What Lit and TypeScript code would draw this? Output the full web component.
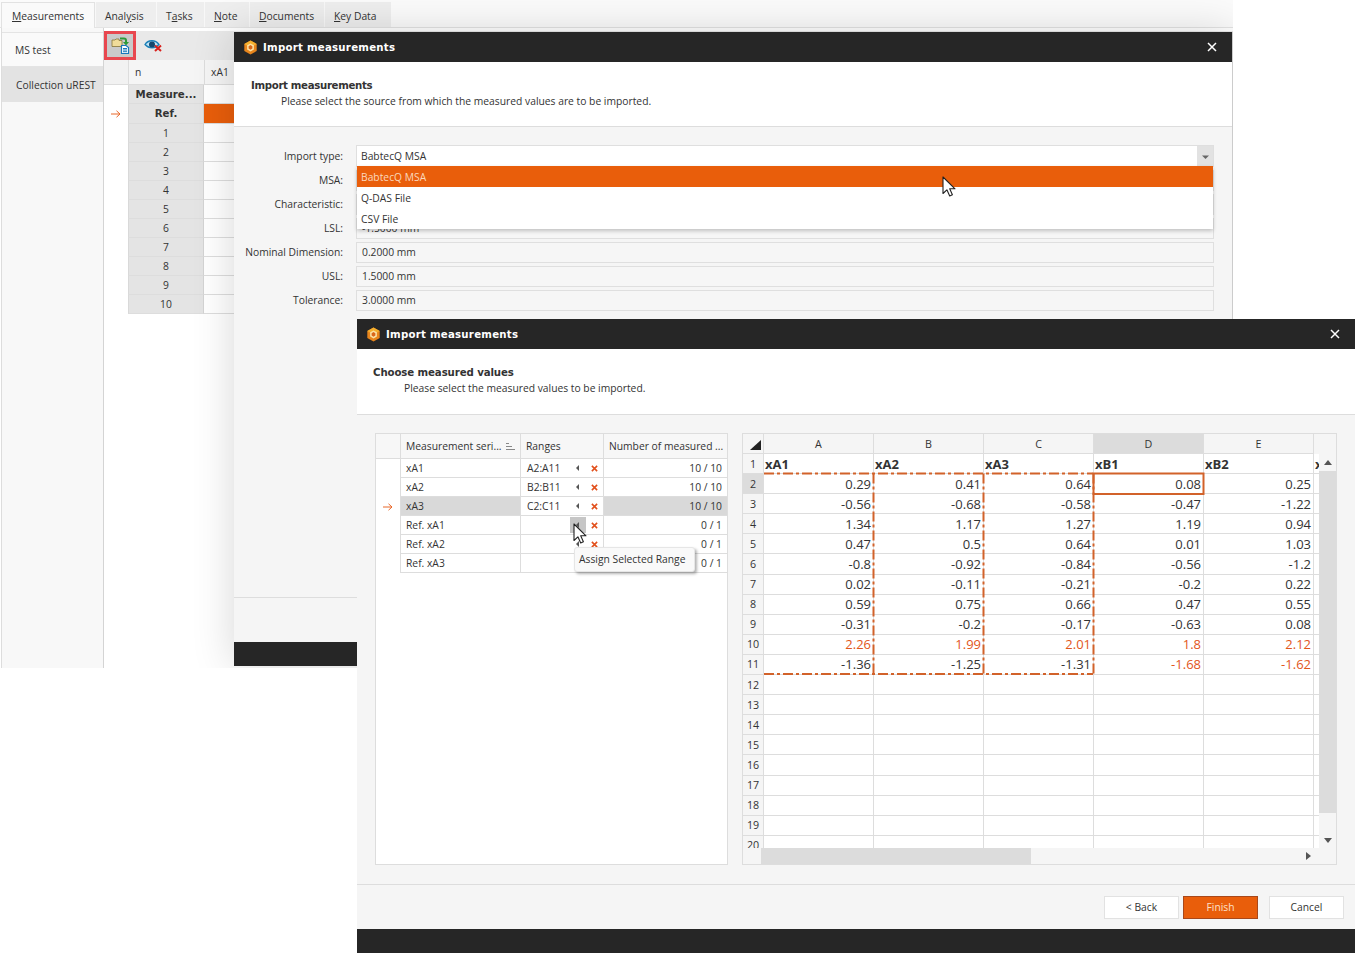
import { LitElement, html, css, svg } from "lit";
import { customElement } from "lit/decorators.js";

const logo = () => html`<svg class="logo" viewBox="0 0 16 16"><path d="M8 .5 14.6 4.2V11.8L8 15.5 1.4 11.8V4.2Z" fill="#e8851c"/><path d="M8 .5 14.6 4.2 8 8 1.4 4.2Z" fill="#f5b02e"/><path d="M8 3.6 11.6 5.7V10L8 12.2 4.4 10V5.7Z" fill="#fbe3a6"/><path d="M8 5.4 10 6.6V9.1L8 10.3 6 9.1V6.6Z" fill="#d9661a"/></svg>`;
const closeX = () => html`<svg class="close" viewBox="0 0 10 10"><path d="M1 1 9 9M9 1 1 9" stroke="#fff" stroke-width="1.5" fill="none"/></svg>`;
const rowArrow = () => html`<svg class="rowarrow" viewBox="0 0 10 8"><path d="M0 4H9M5.5 .8 9 4 5.5 7.2" stroke="#e8682a" stroke-width="1" fill="none"/></svg>`;
const cursor = () => svg`<path d="M1 1V17.5L4.9 13.8 7.7 20 10.4 18.8 7.7 12.8H13Z" fill="#fff" stroke="#222" stroke-width="1.1" stroke-linejoin="round"/>`;
const redX = () => html`<svg class="redx" viewBox="0 0 8 8"><path d="M1 1 7 7M7 1 1 7" stroke="#e2501c" stroke-width="1.8" fill="none"/></svg>`;
const tri = () => html`<svg class="tri" viewBox="0 0 4 8"><path d="M4 0V8L0 4Z" fill="#555"/></svg>`;

const cols = [
  ["0.29","-0.56","1.34","0.47","-0.8","0.02","0.59","-0.31","2.26","-1.36"],
  ["0.41","-0.68","1.17","0.5","-0.92","-0.11","0.75","-0.2","1.99","-1.25"],
  ["0.64","-0.58","1.27","0.64","-0.84","-0.21","0.66","-0.17","2.01","-1.31"],
  ["0.08","-0.47","1.19","0.01","-0.56","-0.2","0.47","-0.63","1.8","-1.68"],
  ["0.25","-1.22","0.94","1.03","-1.2","0.22","0.55","0.08","2.12","-1.62"],
];
const heads = ["xA1","xA2","xA3","xB1","xB2"];

@customElement("app-root")
export class AppRoot extends LitElement {
  static styles = css`
    :host { display:block; width:1355px; height:953px; position:relative; overflow:hidden; background:#fff; color:#333;
      font-family:"Open Sans","Noto Sans",sans-serif; font-size:10.3px; }
    * { box-sizing:border-box; }
    svg { display:block; }
    .app { position:absolute; left:0; top:0; width:1233px; height:668px; overflow:hidden; background:#fff; display:flex; flex-direction:column; }
    .tabs { height:28px; padding:2px 0 0 1px; display:flex; background:#fbfbfb; border-bottom:1px solid #e4e4e4; flex:none; }
    .tab { background:#eee; border-left:1px solid #f8f8f8; height:25px; padding-top:7px; padding-left:9px; white-space:nowrap; }
    .tab.on { background:#fafafa; width:94px; padding-left:10px; padding-top:6px; border:1px solid #e2e2e2; border-bottom:none; height:26px; }
    .t1{width:61px}.t2{width:48px}.t3{width:45px}.t4{width:75px}.t5{width:67px}
    .body { flex:1; display:flex; padding-left:1px; min-height:0; }
    .rail { width:103px; flex:none; background:#f8f8f8; border-left:1px solid #ddd; border-right:1px solid #d4d4d4; padding-top:4px; }
    .rail div { height:35px; display:flex; align-items:center; padding-left:13px; white-space:nowrap; }
    .rail .ms { background:#fafafa; border-top:1px solid #e4e4e4; border-bottom:1px solid #e4e4e4; }
    .rail .col { background:#e3e3e3; padding-left:14px; }
    .main { flex:1; min-width:0; padding-top:3px; }
    .toolbar { height:29px; background:#e9e9e9; display:flex; align-items:center; }
    .imp { width:32px; height:29px; border:3px solid #e8474f; background:#cacaca; display:flex; align-items:center; justify-content:center; }
    .eye { margin-left:8px; margin-top:-1px; }
    .bgrid { display:grid; grid-template-columns:24px 76px 1fr; grid-template-rows:19px 20px; grid-auto-rows:19px; width:130px; }
    .bgrid > div { border-bottom:1px solid #ddd; display:flex; align-items:center; }
    .bhead { display:grid; grid-template-columns:24px 76px 1fr; height:25px; width:130px; background:#f5f5f5; border-bottom:1px solid #ddd; }
    .bhead div { display:flex; align-items:center; padding-left:6px; border-left:1px solid #ddd; }
    .bhead div:first-child { background:#f2f2f2; border-left:none; }
    .bgrid .e { border-bottom:none; position:relative; justify-content:center; }
    .bgrid .n { background:#e4e4e4; justify-content:center; border-left:1px solid #d9d9d9; border-right:1px solid #d4d4d4; }
    .bgrid .b { font-family:"DejaVu Sans",sans-serif; font-weight:700; font-size:10.2px; }
    .bgrid .o { background:#e95e0b; }
    .rowarrow { width:10px; height:8px; }

    .dlg { position:absolute; width:998px; height:634px; background:#f5f5f5; display:flex; flex-direction:column; }
    .d1 { left:234px; top:32px; width:999px; border-right:1px solid #ccc; box-shadow:0 0 40px rgba(0,0,0,.16); }
    .d2 { left:357px; top:319px; }
    .bar { height:30px; background:#262626; color:#fff; display:flex; align-items:center; flex:none; padding-left:9px; }
    .bar .ttl { font-family:"DejaVu Sans",sans-serif; font-weight:700; font-size:10.2px; letter-spacing:.25px; margin-left:5px; flex:1; }
    .logo { width:15px; height:15px; }
    .close { width:10px; height:10px; margin-right:15px; }
    .hd { background:#fff; border-bottom:1px solid #ddd; flex:none; }
    .d1 .hd { height:65px; padding:16px 0 0 17px; }
    .d2 .hd { height:66px; padding:16px 0 0 16px; }
    .hd h2 { margin:0; font-family:"DejaVu Sans",sans-serif; font-size:10.2px; font-weight:700; line-height:15px; color:#333; }
    .d1 .hd h2 { letter-spacing:-.33px; }
    .d2 .hd h2 { letter-spacing:-.1px; }
    .hd p { margin:1px 0 0 30px; line-height:15px; }
    .d2 .hd p { margin-left:31px; }
    .d1 .f { flex:1; padding:19px 18px 0 0; min-height:0; }
    .frow { display:grid; grid-template-columns:109px 858px; column-gap:13px; height:24px; align-items:start; }
    .frow label { text-align:right; line-height:21px; white-space:nowrap; }
    .fld { height:21px; border:1px solid #dfdfdf; background:#f6f6f6; padding-left:5px; line-height:19px; }
    .frow.top .fld { background:#fff; height:22px; margin-top:-1px; display:flex; justify-content:space-between; padding:0 0 0 4px; line-height:20px; }
    .combo { width:16px; background:#e2e2e2; display:flex; align-items:center; justify-content:center; }
    .dd { position:absolute; left:123px; top:134px; width:856px; height:63px; background:#fff; box-shadow:0 2px 4px rgba(0,0,0,.22); }
    .dd div { height:21px; line-height:20px; padding:1px 0 0 4px; }
    .dd .sel { background:#e95e0b; color:#fbd8bd; }
    .d1 .ft { height:45px; flex:none; border-top:1px solid #ddd; }
    .dark { height:24px; background:#262626; flex:none; }

    .d2 .c { flex:1; display:flex; padding:18px 18px 0 18px; min-height:0; gap:14px; }
    .ltable { width:353px; height:432px; border:1px solid #ddd; background:#fff; display:grid; grid-template-columns:24px 120px 83px 124px; grid-template-rows:25px repeat(6,19px); align-content:start; }
    .lh { background:#f7f7f7; border-bottom:1px solid #ddd; border-left:1px solid #ddd; display:flex; align-items:center; padding-left:5px; white-space:nowrap; overflow:hidden; justify-content:space-between; }
    .lh:first-child { border-left:none; }
    .lc { border-left:1px solid #ddd; border-bottom:1px solid #ddd; padding-left:5px; display:flex; align-items:center; white-space:nowrap; }
    .lc.r { justify-content:flex-end; padding-right:5px; }
    .lc.s { background:#d9d9d9; }
    .lc.ind { border:none; justify-content:center; padding:0; }
    .lc.rg { padding-left:6px; }
    .rg span { width:43px; }
    .hv { width:16px; height:16px; display:flex; align-items:center; justify-content:center; }
    .hv.on { background:#c6c6c6; }
    .redx { width:7px; height:7px; margin-left:5px; }
    .tri { width:3px; height:6px; margin-right:1px; }

    .sheet { width:595px; height:432px; border:1px solid #ddd; display:grid; grid-template-columns:1fr 17px; grid-template-rows:20px 394px 16px; background:#f5f5f5; }
    .shead { grid-column:1 / 3; display:grid; grid-template-columns:21px repeat(5,110px) 1fr; background:#f5f5f5; }
    .shead div { border-right:1px solid #ddd; border-bottom:1px solid #ddd; display:flex; align-items:center; justify-content:center; position:relative; font-size:10.7px; }
    .shead div:last-child { border-right:none; border-bottom:none; }
    .shead .hl { background:#dcdcdc; }
    .corner { width:11px; height:10px; position:absolute; right:2px; bottom:3px; }
    .vp { position:relative; overflow:hidden; background:#fff; }
    .srows { display:grid; grid-template-columns:21px repeat(5,110px) 10px; grid-auto-rows:20.1px; font-size:13px; }
    .srows > div { border-right:1px solid #ddd; border-bottom:1px solid #ddd; display:flex; align-items:center; justify-content:flex-end; padding-right:2px; overflow:hidden; white-space:nowrap; }
    .srows .rh { background:#f5f5f5; justify-content:center; font-size:10.7px; padding:0; }
    .srows .rh.hl { background:#dcdcdc; }
    .srows .hb { justify-content:flex-start; font-weight:700; padding-left:1px; }
    .srows .alert { color:#e2561a; }
    .ants { position:absolute; left:0; top:0; pointer-events:none; }
    .vs { background:#f5f5f5; display:flex; flex-direction:column; align-items:center; }
    .vs .up { height:17px; flex:none; display:flex; align-items:center; justify-content:center; }
    .vs .th { height:342px; width:100%; background:#dcdcdc; flex:none; }
    .vs .dn { flex:1; display:flex; align-items:flex-end; padding-bottom:5px; }
    .hs { display:flex; align-items:center; background:#f5f5f5; padding-left:18px; }
    .hs .th { width:270px; height:100%; background:#dcdcdc; }
    .hs .sp { flex:1; }
    .cornerfill { background:#f5f5f5; }
    .ft2 { height:45px; flex:none; margin-top:19px; border-top:1px solid #ddd; padding:11px 11px 0 0; display:flex; justify-content:flex-end; }
    .btn { width:75px; height:23px; background:#fff; border:1px solid #e2e2e2; display:flex; align-items:center; justify-content:center; padding-bottom:1px; }
    .btn.pri { background:#e95e0b; border-color:#a8481a; color:#fde0c9; margin:0 11px 0 4px; }
    .tip { position:absolute; left:574px; top:547px; width:121px; height:25px; background:#f9f9f9; border:1px solid #e6e6e6; border-radius:3px; box-shadow:2px 2px 3px rgba(0,0,0,.3); display:flex; align-items:center; padding:0 0 2px 4px; white-space:nowrap; }
    .cur { position:absolute; width:14px; height:21px; overflow:visible; }
    .c1 { left:942px; top:176px; }
    .c2 { left:573px; top:523px; }
    u { text-underline-offset:1px; }
  `;

  render() {
    return html`
      <div class="app">
        <div class="tabs">
          <div class="tab on"><u>M</u>easurements</div>
          <div class="tab t1">Anal<u>y</u>sis</div>
          <div class="tab t2">T<u>a</u>sks</div>
          <div class="tab t3"><u>N</u>ote</div>
          <div class="tab t4"><u>D</u>ocuments</div>
          <div class="tab t5"><u>K</u>ey Data</div>
        </div>
        <div class="body">
          <div class="rail"><div class="ms">MS test</div><div class="col">Collection uREST</div></div>
          <div class="main">
            <div class="toolbar">
              <div class="imp">
                <svg width="20" height="17" viewBox="0 0 20 17">
                  <path d="M2 3H5L6 2H9V3.500H12V9.500H2Z" fill="#f0dc9a" stroke="#857338" stroke-width=".8"/>
                  <path d="M10 .5H14C16 .5 17 1.500 17 3.500V5H19L16 8.500 13 5H15V3.500C15 3 14.500 2.500 14 2.500H10Z" fill="#2f9a3a"/>
                  <path d="M11.500 8.500H16L18.500 10.500V16.500H11.500Z" fill="#fff" stroke="#1878bd" stroke-width="1.200"/>
                  <path d="M13 11.500H17M13 13H17M13 14.700H17" stroke="#1878bd"/>
                </svg>
              </div>
              <svg class="eye" width="19" height="14" viewBox="0 0 19 14">
                <path d="M1 6.500C4 2 11 1 15 6.500 11 11 5 11 1 6.500Z" fill="#bfe3f5" stroke="#1b7fb8" stroke-width="1.300"/>
                <circle cx="8" cy="6.500" r="3" fill="#14476e"/>
                <path d="M11 7.500 17 13M17 7.500 11 13" stroke="#d9201c" stroke-width="2"/>
              </svg>
            </div>
            <div class="bhead"><div></div><div>n</div><div>xA1</div></div>
            <div class="bgrid">
              <div class="e"></div><div class="n b">Measure...</div><div></div>
              <div class="e">${rowArrow()}</div><div class="n b">Ref.</div><div class="o"></div>
              ${[1,2,3,4,5,6,7,8,9,10].map(n => html`<div class="e"></div><div class="n">${n}</div><div></div>`)}
            </div>
          </div>
        </div>

        <div class="dlg d1">
          <div class="bar">${logo()}<span class="ttl">Import measurements</span>${closeX()}</div>
          <div class="hd"><h2>Import measurements</h2><p>Please select the source from which the measured values are to be imported.</p></div>
          <div class="f">
            <div class="frow top"><label>Import type:</label><div class="fld">BabtecQ MSA<span class="combo"><svg width="7" height="5" viewBox="0 0 7 5"><path d="M0 1.500H7L3.500 5Z" fill="#666"/></svg></span></div></div>
            <div class="frow"><label>MSA:</label><div class="fld"></div></div>
            <div class="frow"><label>Characteristic:</label><div class="fld"></div></div>
            <div class="frow"><label>LSL:</label><div class="fld">-1.5000 mm</div></div>
            <div class="frow"><label>Nominal Dimension:</label><div class="fld">0.2000 mm</div></div>
            <div class="frow"><label>USL:</label><div class="fld">1.5000 mm</div></div>
            <div class="frow"><label>Tolerance:</label><div class="fld">3.0000 mm</div></div>
            <div class="dd"><div class="sel">BabtecQ MSA</div><div>Q-DAS File</div><div>CSV File</div></div>
          </div>
          <div class="ft"></div>
          <div class="dark"></div>
        </div>
      </div>

      <div class="dlg d2">
        <div class="bar">${logo()}<span class="ttl">Import measurements</span>${closeX()}</div>
        <div class="hd"><h2>Choose measured values</h2><p>Please select the measured values to be imported.</p></div>
        <div class="c">
          <div class="ltable">
            <div class="lh"></div>
            <div class="lh">Measurement seri...<svg width="9" height="7" viewBox="0 0 9 7" style="margin-right:5px;flex:none"><path d="M0 .5H3M0 3.500H6M0 6.500H9" stroke="#888"/></svg></div>
            <div class="lh">Ranges</div>
            <div class="lh">Number of measured ...</div>
            ${[["xA1","A2:A11","10 / 10"],["xA2","B2:B11","10 / 10"],["xA3","C2:C11","10 / 10"],["Ref. xA1","","0 / 1"],["Ref. xA2","","0 / 1"],["Ref. xA3","","0 / 1"]].map((r,i)=>html`
              <div class="lc ind">${i===2?rowArrow():""}</div>
              <div class="lc ${i===2?"s":""}">${r[0]}</div>
              <div class="lc rg"><span>${r[1]}</span><div class="hv ${i===3?"on":""}">${tri()}</div>${redX()}</div>
              <div class="lc r ${i===2?"s":""}">${r[2]}</div>
            `)}
          </div>
          <div class="sheet">
            <div class="shead">
              <div><svg class="corner" viewBox="0 0 11 10"><path d="M11 0V10H0Z" fill="#222"/></svg></div>
              <div>A</div><div>B</div><div>C</div><div class="hl">D</div><div>E</div><div></div>
            </div>
            <div class="vp">
              <div class="srows">
                <div class="rh">1</div>
                ${heads.map(h=>html`<div class="hb">${h}</div>`)}<div class="hb">x</div>
                ${cols[0].map((_,i)=>html`
                  <div class="rh ${i===0?"hl":""}">${i+2}</div>
                  ${cols.map((c,j)=>html`<div class="${i===8||(i===9&&j>2)?"alert":""}">${c[i]}</div>`)}<div></div>
                `)}
                ${[12,13,14,15,16,17,18,19,20].map(n=>html`<div class="rh">${n}</div><div></div><div></div><div></div><div></div><div></div><div></div>`)}
              </div>
              <svg class="ants" width="578" height="394">
                <g stroke="#d2622a" stroke-width="2" fill="none">
                  <path stroke-dasharray="10 3 3 3" d="M21 19.500H350M21 220H350M130.500 19.500V220M240.500 19.500V220M350.500 19.500V220"/>
                  <rect x="350.500" y="19.500" width="110" height="20.500"/>
                </g>
              </svg>
            </div>
            <div class="vs">
              <div class="up"><svg width="8" height="5" viewBox="0 0 8 5"><path d="M4 0 8 5H0Z" fill="#555"/></svg></div>
              <div class="th"></div>
              <div class="dn"><svg width="8" height="5" viewBox="0 0 8 5"><path d="M0 0H8L4 5Z" fill="#555"/></svg></div>
            </div>
            <div class="hs">
              <div class="th"></div><div class="sp"></div>
              <svg width="5" height="8" viewBox="0 0 5 8" style="margin-right:8px"><path d="M0 0 5 4 0 8Z" fill="#555"/></svg>
            </div>
            <div class="cornerfill"></div>
          </div>
        </div>
        <div class="ft2">
          <div class="btn">&lt; Back</div><div class="btn pri">Finish</div><div class="btn">Cancel</div>
        </div>
        <div class="dark"></div>
      </div>

      <div class="tip">Assign Selected Range</div>
      <svg class="cur c1" viewBox="0 0 14 21">${cursor()}</svg>
      <svg class="cur c2" viewBox="0 0 14 21">${cursor()}</svg>
    `;
  }
}
